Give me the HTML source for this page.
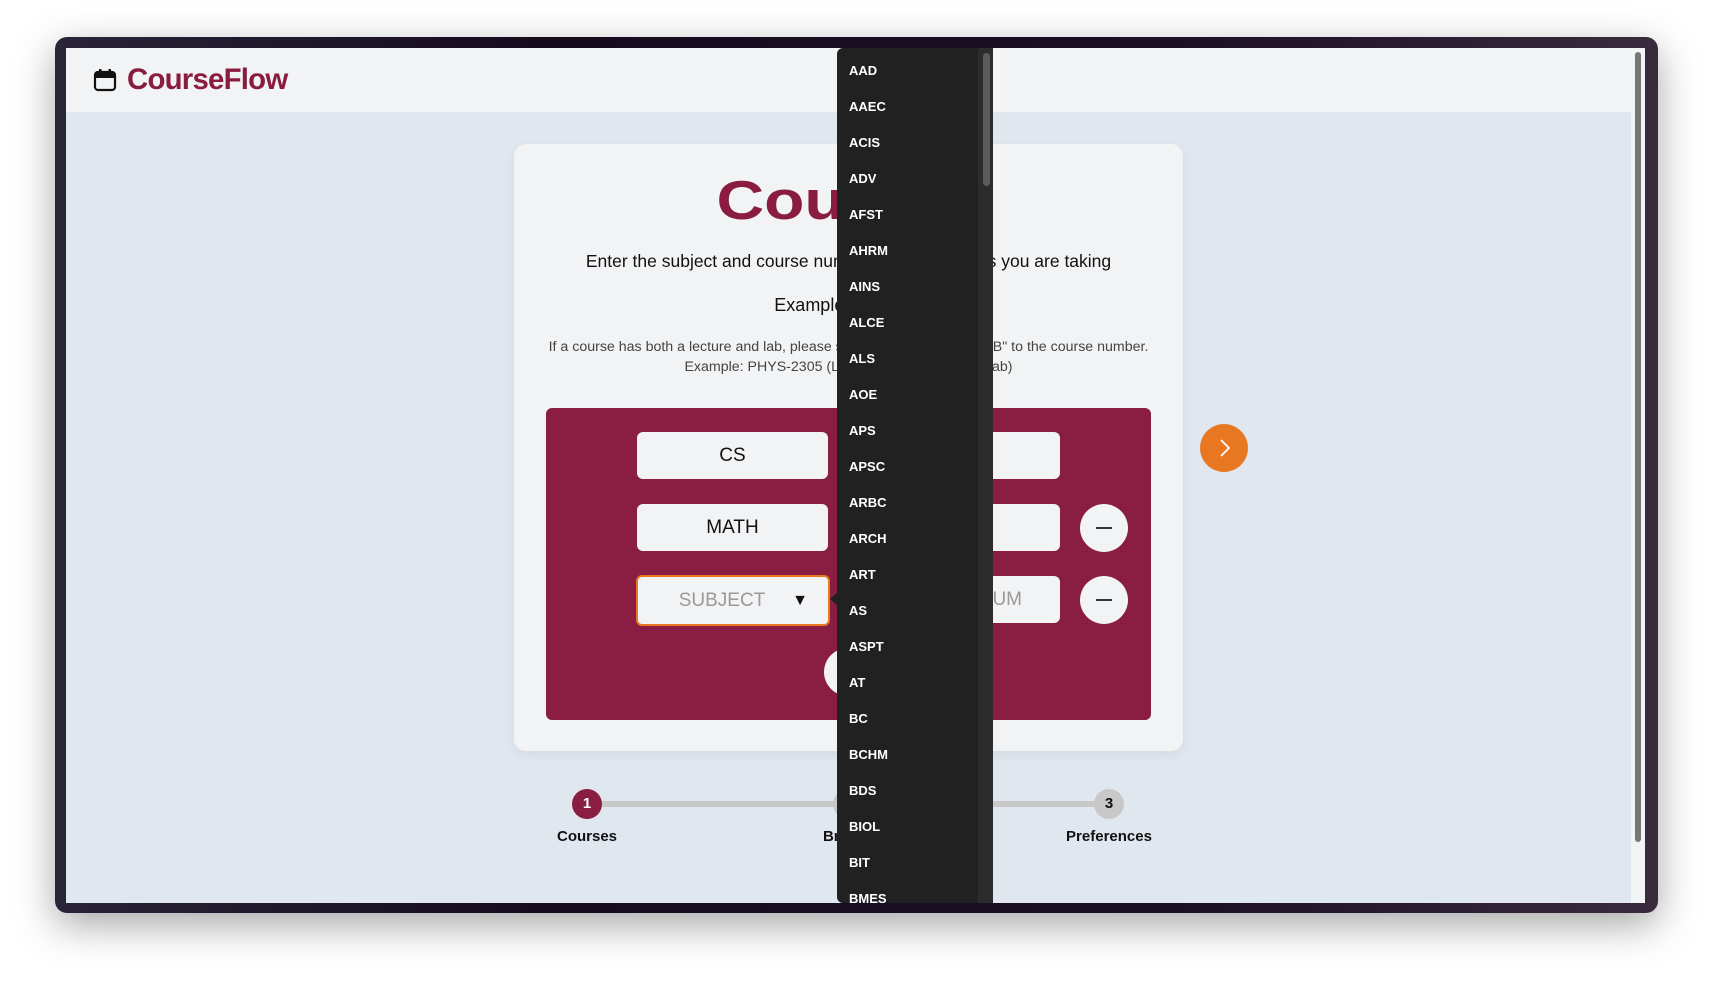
<!DOCTYPE html>
<html><head><meta charset="utf-8"><style>
*{box-sizing:border-box;margin:0;padding:0}
body{width:1712px;height:987px;background:#fff;font-family:"Liberation Sans",sans-serif;position:relative;overflow:hidden}
.frame{position:absolute;left:55px;top:37px;width:1603px;height:876px;border-radius:12px;background:linear-gradient(90deg,#2a2438,#150c1e 30%,#1c1024 70%,#3a2a3e);box-shadow:0 12px 40px rgba(0,0,0,.35)}
.screen{position:absolute;left:66px;top:48px;width:1565px;height:855px;background:#e1e7ef;overflow:hidden}
.sb{position:absolute;left:1631px;top:48px;width:14px;height:855px;background:#f2f3f5}
.sb i{position:absolute;left:4px;top:4px;width:6px;height:790px;background:#777;border-radius:3px}
.hdr{position:absolute;left:0;top:0;width:100%;height:64px;background:#f2f3f5}
.logo{position:absolute;left:61px;top:15px;font-size:30px;font-weight:bold;color:#8a1c42;letter-spacing:-0.8px;transform:scaleX(.98);transform-origin:left}
.card{position:absolute;left:448px;top:96px;width:669px;height:607px;background:#f2f3f5;border-radius:12px;box-shadow:0 4px 12px rgba(0,0,0,.06)}
.t{position:absolute;width:100%;text-align:center}
.mb{position:absolute;left:480px;top:360px;width:605px;height:312px;background:#891e42;border-radius:6px}
.in{position:absolute;width:191px;height:47px;background:#f2f3f5;border-radius:6px;font-size:19px;text-align:center;line-height:47px;color:#111}
.minus{position:absolute;width:48px;height:48px;border-radius:50%;background:#f2f3f5}
.minus:after{content:"";position:absolute;left:16px;top:23px;width:16px;height:2px;background:#333}
.dd{position:absolute;left:771px;top:0;width:156px;height:855px;background:#212121;border-radius:6px 0 0 6px}
.dd .tr{position:absolute;right:0;top:0;width:15px;height:100%;background:#2c2c2c}
.dd .th{position:absolute;right:3px;top:5px;width:7px;height:133px;background:#5b5b5b;border-radius:4px}
.dd div.it{position:absolute;left:12px;color:#fff;font-size:13px;font-weight:bold}
.step{position:absolute;width:30px;height:30px;border-radius:50%;text-align:center;line-height:30px;font-weight:bold;font-size:15px}
.lbl{position:absolute;font-weight:bold;font-size:15px;color:#111;width:200px;text-align:center}
</style></head><body>
<div class="frame"></div>
<div class="screen">
 <div class="hdr">
  <svg style="position:absolute;left:27px;top:20px" width="24" height="24" viewBox="0 0 24 24"><rect x="2" y="4" width="20" height="18" rx="3" fill="none" stroke="#111" stroke-width="2.2"/><rect x="2" y="4" width="20" height="6" rx="2" fill="#111"/><rect x="6" y="1" width="2.5" height="5" fill="#111"/><rect x="15.5" y="1" width="2.5" height="5" fill="#111"/></svg>
  <div class="logo">CourseFlow</div>
 </div>
 <div class="card">
  <div class="t" style="top:24px;font-size:55px;font-weight:bold;color:#8a1c42;transform:scaleX(1.2)">Courses</div>
  <div class="t" style="top:107px;font-size:17.5px;color:#111">Enter the subject and course numbers of the courses you are taking</div>
  <div class="t" style="top:151px;font-size:18px;color:#111">Example: CS-1114</div>
  <div class="t" style="top:193px;font-size:14.2px;color:#444;line-height:20px">If a course has both a lecture and lab, please specify by adding "L" or "B" to the course number.<br>Example: PHYS-2305 (Lecture), PHYS-2305B (Lab)</div>
 </div>
 <div class="mb">
  <div class="in" style="left:91px;top:24px">CS</div>
  <div class="in" style="left:323px;top:24px"></div>
  <div class="in" style="left:91px;top:96px">MATH</div>
  <div class="in" style="left:323px;top:96px"></div>
  <div class="minus" style="left:534px;top:96px"></div>
  <div class="in" style="left:90px;top:167px;width:194px;height:51px;border:2px solid #e87722;line-height:47px;color:#999;padding-right:22px">SUBJECT<span style="position:absolute;right:20px;color:#111;font-size:16px">▼</span></div>
  <div class="in" style="left:323px;top:168px;color:#999;text-align:right;padding-right:38px">NUM</div>
  <div class="minus" style="left:534px;top:168px"></div>
  <div class="minus" style="left:278px;top:240px"></div>
 </div>
 <div style="position:absolute;left:1134px;top:376px;width:48px;height:48px;border-radius:50%;background:#e87722"><svg width="48" height="48"><path d="M21 16l8 8-8 8" fill="none" stroke="#fff" stroke-width="1.8"/></svg></div>
 <div style="position:absolute;left:521px;top:753px;width:522px;height:6px;background:#c8c8c8"></div>
 <div class="step" style="left:506px;top:741px;background:#891e42;color:#fff">1</div>
 <div class="step" style="left:767px;top:741px;background:#c8c8c8;color:#111">2</div>
 <div class="step" style="left:1028px;top:741px;background:#c8c8c8;color:#111">3</div>
 <div class="lbl" style="left:421px;top:780px">Courses</div>
 <div class="lbl" style="left:682px;top:780px">Breaks</div>
 <div class="lbl" style="left:943px;top:780px">Preferences</div>
 <div style="position:absolute;left:764px;top:544px;width:0;height:0;border-top:7px solid transparent;border-bottom:7px solid transparent;border-right:8px solid #212121"></div>
 <div class="dd"><div class="tr"></div><div class="th"></div>
  <div class="it" style="top:15px">AAD</div><div class="it" style="top:51px">AAEC</div><div class="it" style="top:87px">ACIS</div><div class="it" style="top:123px">ADV</div><div class="it" style="top:159px">AFST</div><div class="it" style="top:195px">AHRM</div><div class="it" style="top:231px">AINS</div><div class="it" style="top:267px">ALCE</div><div class="it" style="top:303px">ALS</div><div class="it" style="top:339px">AOE</div><div class="it" style="top:375px">APS</div><div class="it" style="top:411px">APSC</div><div class="it" style="top:447px">ARBC</div><div class="it" style="top:483px">ARCH</div><div class="it" style="top:519px">ART</div><div class="it" style="top:555px">AS</div><div class="it" style="top:591px">ASPT</div><div class="it" style="top:627px">AT</div><div class="it" style="top:663px">BC</div><div class="it" style="top:699px">BCHM</div><div class="it" style="top:735px">BDS</div><div class="it" style="top:771px">BIOL</div><div class="it" style="top:807px">BIT</div><div class="it" style="top:843px">BMES</div>
 </div>
</div>
<div class="sb"><i></i></div>
</body></html>
